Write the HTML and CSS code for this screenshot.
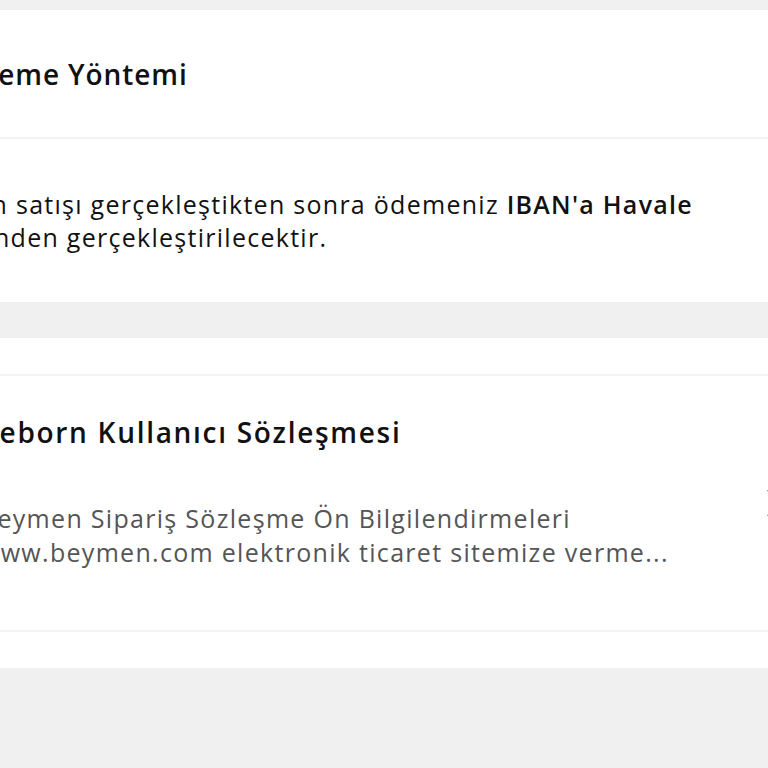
FILE: index.html
```html
<!DOCTYPE html>
<html lang="tr">
<head>
<meta charset="utf-8">
<link rel="stylesheet" href="styles.css">
<title>Ödeme</title>
</head>
<body>
<div class="page">
  <section class="card">
    <div class="card-head">
      <h2 class="title title-pay">Ödeme Yöntemi</h2>
    </div>
    <div class="card-body">
      <p class="pay-text">Ürün satışı gerçekleştikten sonra ödemeniz <strong>IBAN'a Havale</strong> üzerinden gerçekleştirilecektir.</p>
    </div>
  </section>
  <section class="card card-list">
    <div class="list-pad"></div>
    <div class="list-row">
      <div class="row-text">
        <h2 class="title title-contract">Reborn Kullanıcı Sözleşmesi</h2>
        <p class="desc">Beymen Sipariş Sözleşme Ön Bilgilendirmeleri<br>www.beymen.com elektronik ticaret sitemize verme...</p>
      </div>
      <svg class="chev" width="16" height="30" viewBox="0 0 16 30"><path d="M2 2 L14 15 L2 28" fill="none" stroke="#222" stroke-width="2"/></svg>
    </div>
    <div class="list-pad"></div>
  </section>
</div>
</body>
</html>
```
FILE: styles.css
```css
html, body {
  margin: 0;
  padding: 0;
  background: #f0f0f0;
  overflow: hidden;
}
body {
  font-family: "Open Sans", "Noto Sans", sans-serif;
  color: #111;
}
.page {
  padding-top: 10px;
  width: 768px;
}
.card {
  background: #fff;
}
.card-head {
  height: 127px;
  display: flex;
  align-items: center;
  border-bottom: 2px solid #f3f3f3;
  margin-left: -43px;
}
.title {
  margin: 0;
  font-weight: 600;
  font-size: 28px;
  letter-spacing: 0.9px;
}
.card-body {
  height: 163px;
  display: flex;
  align-items: center;
  margin-left: -70px;
  padding-right: 30px;
}
.pay-text {
  margin: 0;
  font-size: 25px;
  line-height: 33px;
  letter-spacing: 1.27px;
  text-indent: 14px;
}
.pay-text strong {
  font-weight: 600;
}
.card-list {
  margin-top: 36px;
}
.list-pad {
  height: 36px;
}
.list-row {
  border-top: 2px solid #f3f3f3;
  border-bottom: 2px solid #f3f3f3;
  height: 254px;
  display: flex;
  align-items: center;
  margin-left: -20px;
  margin-right: -14px;
}
.row-text {
  flex: 1;
  padding-bottom: 24px;
}
.title-contract {
  margin-bottom: 50px;
  letter-spacing: 1.7px;
}
.desc {
  margin: 0;
  font-size: 25px;
  line-height: 34px;
  color: #555;
  letter-spacing: 1.3px;
}
.chev {
  flex: none;
}
```
